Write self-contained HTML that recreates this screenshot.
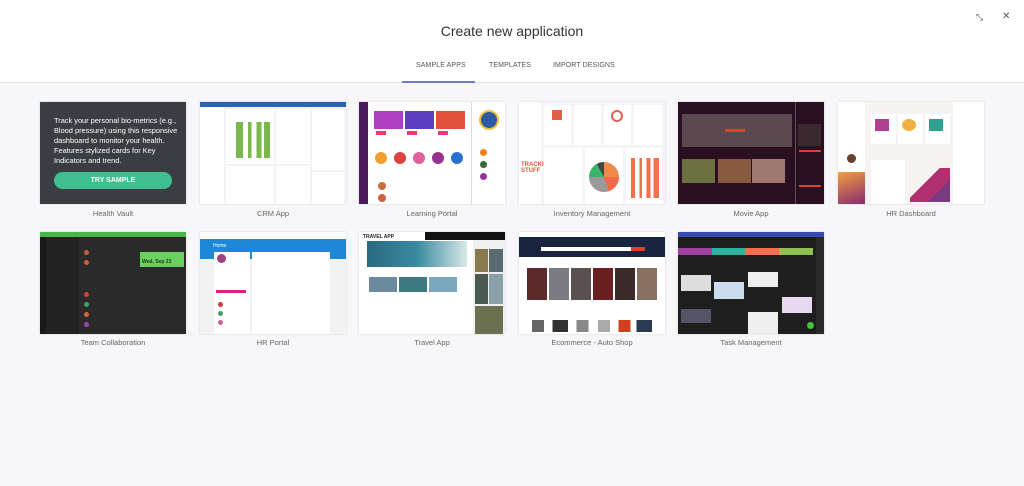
<!DOCTYPE html>
<html><head><meta charset="utf-8"><style>
*{margin:0;padding:0;box-sizing:border-box}
body{width:1024px;height:486px;background:#f7f7f9;font-family:"Liberation Sans",sans-serif;position:relative;overflow:hidden}
.hdr{position:absolute;left:0;top:0;width:1024px;height:83px;background:#fff;border-bottom:1px solid #e3e3e6}
.title{position:absolute;top:23px;width:100%;text-align:center;font-size:14px;color:#333}
.tab{position:absolute;top:62px;font-size:7px;color:#555;letter-spacing:.1px}
.ul{position:absolute;left:402px;top:81px;width:73px;height:2px;background:#6a7bd8}
.c{position:absolute;width:146px;height:102px;background:#fff;overflow:hidden;box-shadow:0 0 2px rgba(0,0,0,.15)}
.c div{position:absolute}
.lb{position:absolute;width:146px;text-align:center;font-size:7.5px;color:#666}
</style></head><body>
<div class="hdr">
<div class="title">Create new application</div>
<div class="tab" style="left:416px">SAMPLE APPS</div>
<div class="tab" style="left:489px">TEMPLATES</div>
<div class="tab" style="left:553px">IMPORT DESIGNS</div>
<div class="ul"></div>
<div style="position:absolute;left:976px;top:12px;font-size:9px;color:#555">⤡</div>
<div style="position:absolute;left:1002px;top:11px;font-size:10px;color:#555">✕</div>
</div>

<!-- Row 1 -->
<div class="c" style="left:40px;top:102px;background:#3a3d42">
<div style="left:14px;top:14px;width:125px;color:#fff;font-size:7.4px;line-height:10px">Track your personal bio-metrics (e.g., Blood pressure) using this responsive dashboard to monitor your health. Features stylized cards for Key Indicators and trend.</div>
<div style="left:14px;top:70px;width:118px;height:17px;border-radius:9px;background:#3fbf8f;color:#fff;font-size:7px;font-weight:bold;text-align:center;line-height:17px">TRY SAMPLE</div>
</div>
<div class="lb" style="left:40px;top:209px">Health Vault</div>

<div class="c" style="left:200px;top:102px;background:#f3f4f6">
<div style="left:0;top:0;width:146px;height:5px;background:#2a64b8"></div>
<div style="left:0;top:5px;width:24px;height:97px;background:#fff"></div>
<div style="left:26px;top:8px;width:48px;height:54px;background:#fff"></div>
<div style="left:36px;top:20px;width:34px;height:36px;background:linear-gradient(90deg,#7ab84e 20%,#fff 20% 35%,#7ab84e 35% 45%,#fff 45% 60%,#7ab84e 60% 75%,#fff 75% 82%,#7ab84e 82%)"></div>
<div style="left:76px;top:8px;width:34px;height:54px;background:#fff"></div>
<div style="left:112px;top:8px;width:32px;height:60px;background:#fff"></div>
<div style="left:26px;top:64px;width:48px;height:38px;background:#fff"></div>
<div style="left:76px;top:64px;width:34px;height:38px;background:#fff"></div>
<div style="left:112px;top:70px;width:32px;height:32px;background:#fff"></div>
</div>
<div class="lb" style="left:200px;top:209px">CRM App</div>

<div class="c" style="left:359px;top:102px">
<div style="left:0;top:0;width:9px;height:102px;background:#4a1a5a"></div>
<div style="left:15px;top:9px;width:29px;height:18px;background:#b03fbf"></div>
<div style="left:46px;top:9px;width:29px;height:18px;background:#5a3fc0"></div>
<div style="left:77px;top:9px;width:29px;height:18px;background:#e0503a"></div>
<div style="left:17px;top:29px;width:10px;height:4px;background:#e83a7a"></div>
<div style="left:48px;top:29px;width:10px;height:4px;background:#e83a7a"></div>
<div style="left:79px;top:29px;width:10px;height:4px;background:#e83a7a"></div>
<div style="left:16px;top:50px;width:12px;height:12px;border-radius:50%;background:#f0a030"></div>
<div style="left:35px;top:50px;width:12px;height:12px;border-radius:50%;background:#e04040"></div>
<div style="left:54px;top:50px;width:12px;height:12px;border-radius:50%;background:#e060a0"></div>
<div style="left:73px;top:50px;width:12px;height:12px;border-radius:50%;background:#9a3090"></div>
<div style="left:92px;top:50px;width:12px;height:12px;border-radius:50%;background:#2a70d0"></div>
<div style="left:19px;top:80px;width:8px;height:8px;border-radius:50%;background:#c87040"></div>
<div style="left:19px;top:92px;width:8px;height:8px;border-radius:50%;background:#d06040"></div>
<div style="left:112px;top:0;width:1px;height:102px;background:#ddd"></div>
<div style="left:120px;top:8px;width:20px;height:20px;border-radius:50%;background:#2a5aa0;border:2px solid #f0c040"></div>
<div style="left:121px;top:47px;width:7px;height:7px;border-radius:50%;background:#f08020"></div>
<div style="left:121px;top:59px;width:7px;height:7px;border-radius:50%;background:#3a6a30"></div>
<div style="left:121px;top:71px;width:7px;height:7px;border-radius:50%;background:#9a30a0"></div>
</div>
<div class="lb" style="left:359px;top:209px">Learning Portal</div>

<div class="c" style="left:519px;top:102px;background:#f5f5f7">
<div style="left:0;top:0;width:22px;height:102px;background:#fff"></div>
<div style="left:2px;top:60px;font-size:6px;color:#e05a3a;line-height:6px;font-weight:bold">TRACKIN<br>STUFF</div>
<div style="left:25px;top:3px;width:27px;height:40px;background:#fff"></div>
<div style="left:55px;top:3px;width:27px;height:40px;background:#fff"></div>
<div style="left:85px;top:3px;width:27px;height:40px;background:#fff"></div>
<div style="left:115px;top:3px;width:28px;height:40px;background:#fff"></div>
<div style="left:33px;top:8px;width:10px;height:10px;background:#e0604a"></div>
<div style="left:92px;top:8px;width:12px;height:12px;border-radius:50%;border:2px solid #e06050"></div>
<div style="left:25px;top:46px;width:38px;height:56px;background:#fff"></div>
<div style="left:66px;top:46px;width:38px;height:56px;background:#fff"></div>
<div style="left:70px;top:60px;width:30px;height:30px;border-radius:50%;background:conic-gradient(#f08a4a 0 25%,#ef6b4a 25% 45%,#999 45% 75%,#3db26a 75% 92%,#444 92%)"></div>
<div style="left:107px;top:46px;width:36px;height:56px;background:#fff;"></div>
<div style="left:112px;top:56px;width:28px;height:40px;background:linear-gradient(90deg,#f07050 15%,#fff 15% 30%,#f07050 30% 40%,#fff 40% 55%,#f07050 55% 70%,#fff 70% 80%,#f07050 80%)"></div>
</div>
<div class="lb" style="left:519px;top:209px">Inventory Management</div>

<div class="c" style="left:678px;top:102px;background:#2a0f20">
<div style="left:4px;top:12px;width:110px;height:33px;background:#5a4a50"></div>
<div style="left:47px;top:27px;width:20px;height:3px;background:#e0402a"></div>
<div style="left:4px;top:57px;width:33px;height:24px;background:#6a7040"></div>
<div style="left:40px;top:57px;width:33px;height:24px;background:#8a5a40"></div>
<div style="left:74px;top:57px;width:33px;height:24px;background:#a07a70"></div>
<div style="left:117px;top:0;width:1px;height:102px;background:#555"></div>
<div style="left:120px;top:22px;width:23px;height:22px;background:#3a2a30"></div>
<div style="left:121px;top:48px;width:22px;height:2px;background:#e0402a"></div>
<div style="left:121px;top:83px;width:22px;height:2px;background:#e0402a"></div>
</div>
<div class="lb" style="left:678px;top:209px">Movie App</div>

<div class="c" style="left:838px;top:102px;background:#f7f3f2">
<div style="left:0;top:0;width:27px;height:102px;background:#fff"></div>
<div style="left:0;top:70px;width:27px;height:32px;background:linear-gradient(160deg,#f0a040,#8a2a70)"></div>
<div style="left:9px;top:52px;width:9px;height:9px;border-radius:50%;background:#6a4030"></div>
<div style="left:33px;top:12px;width:25px;height:30px;background:#fff"></div>
<div style="left:60px;top:12px;width:25px;height:30px;background:#fff"></div>
<div style="left:87px;top:12px;width:25px;height:30px;background:#fff"></div>
<div style="left:37px;top:17px;width:14px;height:12px;background:#b04090"></div>
<div style="left:64px;top:17px;width:14px;height:12px;border-radius:50%;background:#f0b040"></div>
<div style="left:91px;top:17px;width:14px;height:12px;background:#30a090"></div>
<div style="left:33px;top:58px;width:34px;height:44px;background:#fff"></div>
<div style="left:72px;top:66px;width:40px;height:34px;background:linear-gradient(135deg,transparent 40%,#b03070 40% 70%,#7a3a80 70%)"></div>
<div style="left:115px;top:0;width:31px;height:102px;background:#fff"></div>
</div>
<div class="lb" style="left:838px;top:209px">HR Dashboard</div>

<!-- Row 2 -->
<div class="c" style="left:40px;top:232px;background:#2a2a2a">
<div style="left:0;top:0;width:146px;height:5px;background:#4ab64a"></div>
<div style="left:0;top:5px;width:6px;height:97px;background:#1a1a1a"></div>
<div style="left:6px;top:5px;width:33px;height:97px;background:#222"></div>
<div style="left:100px;top:20px;width:44px;height:15px;background:#6ad060"></div>
<div style="left:102px;top:27px;font-size:5px;color:#1a3a1a;font-weight:bold">Wed, Sep 23</div>
<div style="left:44px;top:18px;width:5px;height:5px;border-radius:50%;background:#d05a3a"></div>
<div style="left:44px;top:28px;width:5px;height:5px;border-radius:50%;background:#d05a3a"></div>
<div style="left:44px;top:60px;width:5px;height:5px;border-radius:50%;background:#d04040"></div>
<div style="left:44px;top:70px;width:5px;height:5px;border-radius:50%;background:#40a060"></div>
<div style="left:44px;top:80px;width:5px;height:5px;border-radius:50%;background:#e06030"></div>
<div style="left:44px;top:90px;width:5px;height:5px;border-radius:50%;background:#a040c0"></div>
</div>
<div class="lb" style="left:40px;top:338px">Team Collaboration</div>

<div class="c" style="left:200px;top:232px;background:#f2f2f2">
<div style="left:0;top:0;width:146px;height:7px;background:#fff"></div>
<div style="left:0;top:7px;width:146px;height:20px;background:#1e88d8"></div>
<div style="left:13px;top:11px;font-size:5px;color:#fff">Home</div>
<div style="left:14px;top:20px;width:36px;height:82px;background:#fff"></div>
<div style="left:17px;top:22px;width:9px;height:9px;border-radius:50%;background:#a04080"></div>
<div style="left:16px;top:58px;width:30px;height:3px;background:#e02080"></div>
<div style="left:52px;top:20px;width:78px;height:82px;background:#fff"></div>
<div style="left:18px;top:70px;width:5px;height:5px;border-radius:50%;background:#c04040"></div>
<div style="left:18px;top:79px;width:5px;height:5px;border-radius:50%;background:#40a060"></div>
<div style="left:18px;top:88px;width:5px;height:5px;border-radius:50%;background:#d06090"></div>
</div>
<div class="lb" style="left:200px;top:338px">HR Portal</div>

<div class="c" style="left:359px;top:232px">
<div style="left:8px;top:9px;width:100px;height:26px;background:linear-gradient(90deg,#2a6a80,#3a8aa0 50%,#d8e8e8)"></div>
<div style="left:0;top:0;width:146px;height:8px;background:#fff"></div>
<div style="left:4px;top:2px;font-size:5px;font-weight:bold;color:#222">TRAVEL APP</div>
<div style="left:66px;top:0;width:80px;height:8px;background:#111"></div>
<div style="left:10px;top:45px;width:28px;height:15px;background:#6a8aa0"></div>
<div style="left:40px;top:45px;width:28px;height:15px;background:#3a7a80"></div>
<div style="left:70px;top:45px;width:28px;height:15px;background:#7aa8c0"></div>
<div style="left:114px;top:8px;width:32px;height:94px;background:#f0f0f0"></div>
<div style="left:116px;top:17px;width:13px;height:23px;background:#8a7a50"></div>
<div style="left:130px;top:17px;width:14px;height:23px;background:#5a6a70"></div>
<div style="left:116px;top:42px;width:13px;height:30px;background:#4a5a50"></div>
<div style="left:130px;top:42px;width:14px;height:30px;background:#8aa0a8"></div>
<div style="left:116px;top:74px;width:28px;height:28px;background:#6a7050"></div>
</div>
<div class="lb" style="left:359px;top:338px">Travel App</div>

<div class="c" style="left:519px;top:232px">
<div style="left:0;top:5px;width:146px;height:20px;background:#1a2440"></div>
<div style="left:22px;top:15px;width:90px;height:4px;background:#fff"></div>
<div style="left:112px;top:15px;width:14px;height:4px;background:#e04020"></div>
<div style="left:8px;top:36px;width:20px;height:32px;background:#5a2a2a"></div>
<div style="left:30px;top:36px;width:20px;height:32px;background:#7a7a80"></div>
<div style="left:52px;top:36px;width:20px;height:32px;background:#5a5050"></div>
<div style="left:74px;top:36px;width:20px;height:32px;background:#6a2020"></div>
<div style="left:96px;top:36px;width:20px;height:32px;background:#3a2a2a"></div>
<div style="left:118px;top:36px;width:20px;height:32px;background:#8a7060"></div>
<div style="left:13px;top:88px;width:120px;height:12px;background:linear-gradient(90deg,#666 10%,#fff 10% 17%,#333 17% 30%,#fff 30% 37%,#888 37% 47%,#fff 47% 55%,#aaa 55% 65%,#fff 65% 72%,#d04020 72% 82%,#fff 82% 87%,#2a3a50 87%)"></div>
</div>
<div class="lb" style="left:519px;top:338px">Ecommerce - Auto Shop</div>

<div class="c" style="left:678px;top:232px;background:#1e1e1e">
<div style="left:0;top:0;width:146px;height:5px;background:#3a4ab0"></div>
<div style="left:0;top:16px;width:34px;height:7px;background:#a040a0"></div>
<div style="left:34px;top:16px;width:33px;height:7px;background:#30b0a0"></div>
<div style="left:67px;top:16px;width:34px;height:7px;background:#f07050"></div>
<div style="left:101px;top:16px;width:34px;height:7px;background:#90c050"></div>
<div style="left:3px;top:43px;width:30px;height:16px;background:#ddd"></div>
<div style="left:36px;top:50px;width:30px;height:17px;background:#cde"></div>
<div style="left:70px;top:40px;width:30px;height:15px;background:#eee"></div>
<div style="left:104px;top:65px;width:30px;height:16px;background:#e8d8f0"></div>
<div style="left:3px;top:77px;width:30px;height:14px;background:#556"></div>
<div style="left:70px;top:80px;width:30px;height:22px;background:#eee"></div>
<div style="left:138px;top:5px;width:8px;height:97px;background:#2a2a2a"></div>
<div style="left:129px;top:90px;width:7px;height:7px;border-radius:50%;background:#4ac040"></div>
</div>
<div class="lb" style="left:678px;top:338px">Task Management</div>
</body></html>
